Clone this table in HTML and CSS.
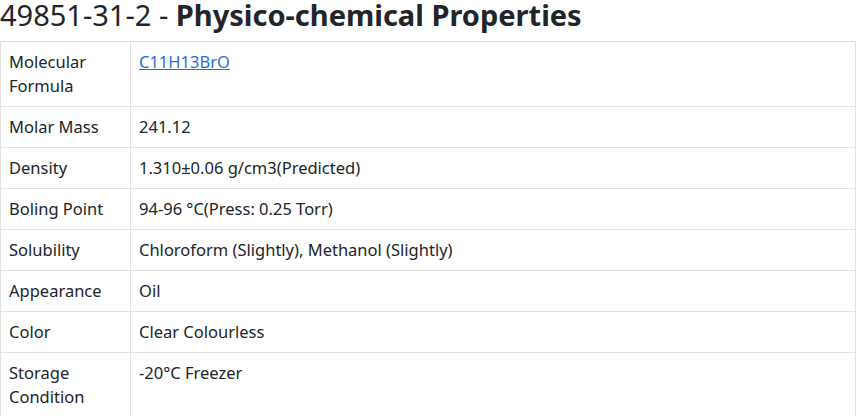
FILE: index.html
```html
<!DOCTYPE html>
<html>
<head>
<meta charset="utf-8">
<link rel="stylesheet" href="styles.css">
</head>
<body>
<h2 class="title">49851-31-2 - <b>Physico-chemical Properties</b></h2>
<table class="props">
  <tr><td class="k">Molecular Formula</td><td class="v"><a href="#">C11H13BrO</a></td></tr>
  <tr><td class="k">Molar Mass</td><td class="v">241.12</td></tr>
  <tr><td class="k">Density</td><td class="v">1.310±0.06 g/cm3(Predicted)</td></tr>
  <tr><td class="k">Boling Point</td><td class="v">94-96 °C(Press: 0.25 Torr)</td></tr>
  <tr><td class="k">Solubility</td><td class="v">Chloroform (Slightly), Methanol (Slightly)</td></tr>
  <tr><td class="k">Appearance</td><td class="v">Oil</td></tr>
  <tr><td class="k">Color</td><td class="v">Clear Colourless</td></tr>
  <tr><td class="k">Storage Condition</td><td class="v">-20°C Freezer</td></tr>
</table>
</body>
</html>
```

FILE: styles.css
```css
html, body {
  margin: 0;
  padding: 0;
  background: #fff;
}
body {
  font-family: "Noto Sans", "Open Sans", sans-serif;
  color: #212529;
}
.title {
  margin: 0;
  height: 41px;
  font-size: 29px;
  line-height: 30px;
  font-weight: 400;
  box-sizing: border-box;
}
.title b {
  font-weight: 700;
}
.props {
  width: 856px;
  border-collapse: collapse;
  font-size: 16.5px;
  line-height: 24px;
}
.props td {
  border: 1px solid #e2e2e2;
  padding: 8px 8px;
  vertical-align: top;
}
.props td.k {
  width: 113px;
}
.props a {
  color: #2a6fd8;
  text-decoration: underline;
}
```
